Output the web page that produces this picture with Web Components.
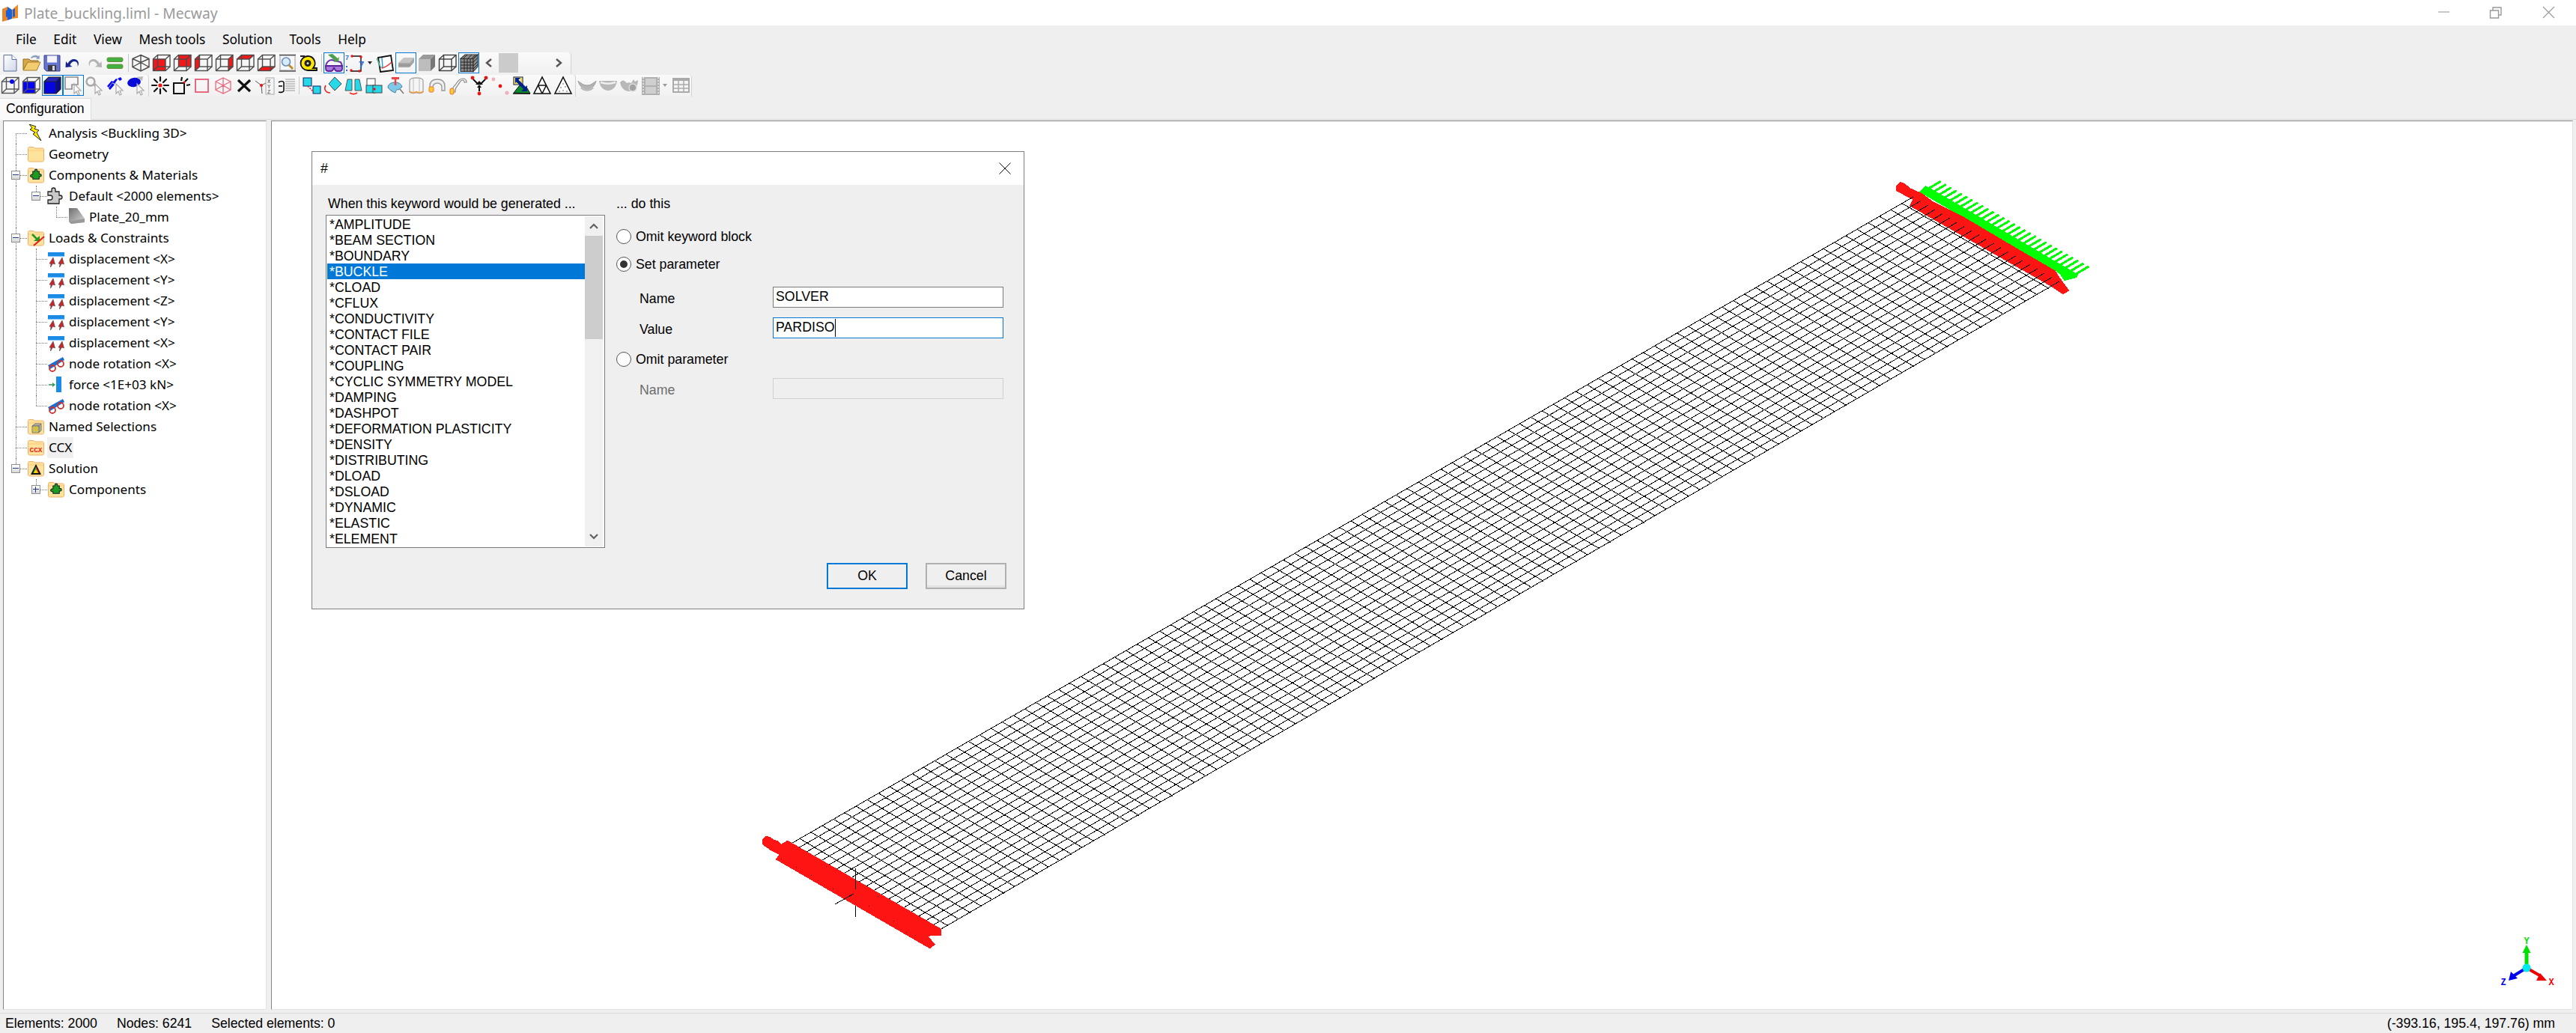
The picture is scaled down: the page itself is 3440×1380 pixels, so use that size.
<!doctype html>
<html><head><meta charset="utf-8"><title>Plate_buckling.liml - Mecway</title>
<style>
html,body{margin:0;height:100%;overflow:hidden;background:#efefef}
body{display:flex;flex-direction:column;font:17px "Noto Sans",sans-serif;color:#000}
</style></head><body>
<title-bar>Plate_buckling.liml - Mecway</title-bar>
<menu-bar><span>File</span><span>Edit</span><span>View</span><span>Mesh tools</span><span>Solution</span><span>Tools</span><span>Help</span></menu-bar>
<tool-row>
 <tool-bar style="width:763px">
  <tb-icon name="new"></tb-icon><tb-icon name="open"></tb-icon><tb-icon name="save"></tb-icon><tb-icon name="undo"></tb-icon><tb-icon name="redo"></tb-icon><tb-icon name="equal"></tb-icon><tb-sep></tb-sep>
  <tb-icon name="c0"></tb-icon><tb-icon name="c1"></tb-icon><tb-icon name="c2"></tb-icon><tb-icon name="c3"></tb-icon><tb-icon name="c4"></tb-icon><tb-icon name="c5"></tb-icon><tb-icon name="c6"></tb-icon><tb-icon name="zoom"></tb-icon><tb-icon name="tape"></tb-icon><tb-sep></tb-sep>
  <tb-icon name="glasses" sel></tb-icon><tb-icon name="graph"></tb-icon><tb-drop></tb-drop>
  <tb-icon name="axes"></tb-icon><tb-icon name="plate" sel></tb-icon><tb-icon name="block"></tb-icon><tb-icon name="wire"></tb-icon><tb-icon name="meshbox" sel></tb-icon>
  <tb-scroll></tb-scroll>
 </tool-bar>
</tool-row>
<tool-row>
 <tool-bar style="width:199px">
  <tb-icon name="pincube"></tb-icon><tb-icon name="bluecube"></tb-icon><tb-icon name="solidcube" sel></tb-icon><tb-icon name="rectsel" sel></tb-icon><tb-icon name="lasso"></tb-icon><tb-icon name="stripe"></tb-icon><tb-icon name="ellipse"></tb-icon>
 </tool-bar>
 <tool-bar style="width:570px;padding-left:1px">
  <tb-icon name="star"></tb-icon><tb-icon name="boxrays"></tb-icon><tb-icon name="pinksq"></tb-icon><tb-icon name="pinkcube"></tb-icon><tb-icon name="cross"></tb-icon><tb-icon name="nodexyz"></tb-icon><tb-icon name="lines"></tb-icon><tb-sep></tb-sep>
  <tb-icon name="cyan1"></tb-icon><tb-icon name="cyan2"></tb-icon><tb-icon name="cyan3"></tb-icon><tb-icon name="cyan4"></tb-icon><tb-icon name="fan"></tb-icon><tb-icon name="ring"></tb-icon><tb-icon name="elbow"></tb-icon><tb-icon name="curve"></tb-icon><tb-icon name="merge"></tb-icon><tb-icon name="dots"></tb-icon><tb-icon name="scale"></tb-icon><tb-icon name="tri"></tb-icon><tb-icon name="tridot"></tb-icon>
 </tool-bar>
 <tool-bar style="width:155px;padding-left:1px">
  <tb-icon name="bowl1"></tb-icon><tb-icon name="bowl2"></tb-icon><tb-icon name="bowl3"></tb-icon><tb-icon name="film"></tb-icon><tb-drop gray></tb-drop><tb-icon name="table" style="margin-left:2px"></tb-icon>
 </tool-bar>
</tool-row>
<tab-strip>Configuration</tab-strip>
<pane-row>
 <tree-pane>
  <tree-row level="0" icon="bolt" v="21:d">Analysis &lt;Buckling 3D&gt;</tree-row>
  <tree-row level="0" icon="folder" v="21">Geometry</tree-row>
  <tree-row level="0" icon="fpuzzle" exp="minus" v="21">Components &amp; Materials</tree-row>
  <tree-row level="1" icon="puzzle" exp="minus" v="21 48:h">Default &lt;2000 elements&gt;</tree-row>
  <tree-row level="2" icon="plateitem" v="21 75:h">Plate_20_mm</tree-row>
  <tree-row level="0" icon="floads" exp="minus" v="21">Loads &amp; Constraints</tree-row>
  <tree-row level="1" icon="disp" v="21 48">displacement &lt;X&gt;</tree-row>
  <tree-row level="1" icon="disp" v="21 48">displacement &lt;Y&gt;</tree-row>
  <tree-row level="1" icon="disp" v="21 48">displacement &lt;Z&gt;</tree-row>
  <tree-row level="1" icon="disp" v="21 48">displacement &lt;Y&gt;</tree-row>
  <tree-row level="1" icon="disp" v="21 48">displacement &lt;X&gt;</tree-row>
  <tree-row level="1" icon="rot" v="21 48">node rotation &lt;X&gt;</tree-row>
  <tree-row level="1" icon="force" v="21 48">force &lt;1E+03 kN&gt;</tree-row>
  <tree-row level="1" icon="rot" v="21 48:h">node rotation &lt;X&gt;</tree-row>
  <tree-row level="0" icon="fnamed" v="21">Named Selections</tree-row>
  <tree-row level="0" icon="fccx" v="21" hl>CCX</tree-row>
  <tree-row level="0" icon="fsol" exp="minus" v="21:h">Solution</tree-row>
  <tree-row level="1" icon="fpuzzle" exp="plus" v="48:h">Components</tree-row>
 </tree-pane>
 <view-port><mesh-view></mesh-view><key-dialog></key-dialog></view-port>
</pane-row>
<status-bar><span>Elements: 2000</span><span>Nodes: 6241</span><span>Selected elements: 0</span><span slot="right">(-393.16, 195.4, 197.76) mm</span></status-bar>
<script>
const ARIAL='"Liberation Sans",Arial,sans-serif';
function def(name,css,html,init){
  customElements.define(name,class extends HTMLElement{
    constructor(){super();const r=this.attachShadow({mode:'open'});r.innerHTML='<style>'+css+'</style>'+(typeof html==='function'?html(this):html);}
    connectedCallback(){ if(init) init(this,this.shadowRoot); }
  });
}
/* ---------- toolbar icons (28 box) ---------- */
const K='#4a4a4a';
function cube(face,col='#f01818',line=K){
  const f={front:'<rect x="2.5" y="9" width="16.5" height="15.5"/>',back:'<rect x="8.5" y="3.5" width="16.5" height="15.5"/>',
  left:'<polygon points="2.5,9 8.5,3.5 8.5,19 2.5,24.5"/>',right:'<polygon points="19,9 25,3.5 25,19 19,24.5"/>',
  top:'<polygon points="2.5,9 8.5,3.5 25,3.5 19,9"/>',bottom:'<polygon points="2.5,24.5 8.5,19 25,19 19,24.5"/>'};
  return `<g fill="${col}">${f[face]||''}</g><g fill="none" stroke="${line}" stroke-width="1.4"><rect x="2.5" y="9" width="16.5" height="15.5"/><rect x="8.5" y="3.5" width="16.5" height="15.5"/><path d="M2.5 9l6-5.5M19 9l6-5.5M2.5 24.5l6-5.5M19 24.5l6-5.5"/></g>`;
}
const arrowCursor=(x=15,y=12,c='#a8a8a8')=>`<path d="M${x} ${y}l9 9h-4l2 5-2 1-2-5-3 3z" fill="#fff" stroke="${c}" stroke-width="1.2"/>`;
const cy='#26d9e8';
const ICONS={
new:`<defs><linearGradient id="g" x1="0" y1="0" x2="1" y2="1"><stop offset="0" stop-color="#fff"/><stop offset="1" stop-color="#cfd8ea"/></linearGradient></defs><path d="M5 3.5h11l6 6v15.5H5z" fill="url(#g)" stroke="#5b6f99"/><path d="M16 3.5v6h6" fill="#fff" stroke="#5b6f99"/>`,
open:`<path d="M3 23V9h8l2 2h10v3H9L3 23z" fill="#d8a848" stroke="#8f6a1e"/><path d="M3 24l6-11h17l-5 11z" fill="#f4cc70" stroke="#a57c28"/><path d="M13 7c3-3.5 7-4 10-2l2-1-.5 5-4.5-.6 1.6-1.4c-2.6-1-5-.6-8 1" fill="#8ea0c0"/>`,
save:`<path d="M3 4h21v21H6l-3-3z" fill="#6474cf" stroke="#3a3f8a"/><rect x="7" y="4.5" width="13" height="9" fill="#f4f4ff"/><rect x="8" y="17" width="11" height="8" fill="#3b3b46"/><rect x="14" y="18" width="3" height="6" fill="#d8d8e0"/>`,
undo:`<path d="M8 17C11 11 16 10 19 11.5S24 17 21 21c1-4-1-7-4-7-3 0-5 2-6 5l3 2-9 1 .5-8z" fill="#16238c" transform="translate(-1.5,-2)"/>`,
redo:`<path d="M8 17C11 11 16 10 19 11.5S24 17 21 21c1-4-1-7-4-7-3 0-5 2-6 5l3 2-9 1 .5-8z" fill="#b4b4b4" transform="matrix(-1,0,0,1,29,-2)"/>`,
equal:`<rect x="3" y="7" width="21" height="5.5" rx="2" fill="#3fb33f" stroke="#6f8a3a"/><rect x="3" y="16" width="21" height="5.5" rx="2" fill="#3fb33f" stroke="#6f8a3a"/>`,
c0:`<path d="M14 3.5l11 5v11l-11 5.5-11-5.5v-11zM3 8.5l11 5 11-5M14 13.5V25M3 19.5l11-6 11 6M14 3.5v10" fill="none" stroke="${K}" stroke-width="1.4"/>`,
c1:cube('front'),c2:cube('back'),c3:cube('left'),c4:cube('right'),c5:cube('top'),c6:cube('bottom'),
zoom:`<rect x="4" y="4" width="20" height="20" fill="#f6f8fc" stroke="#999"/><path d="M3 3.5h22M3 25h22" stroke="#555" stroke-width="1.5"/><circle cx="12" cy="12.5" r="5.5" fill="#d8ecff" stroke="#6a8fb8" stroke-width="1.6"/><path d="M16 17l5 5" stroke="#c08a24" stroke-width="3"/>`,
tape:`<path d="M13 5a9.5 9.5 0 1 0 0 19h12v-3h-5a9.5 9.5 0 0 0-7-16z" fill="#ffe600" stroke="#111" stroke-width="1.8"/><circle cx="13" cy="14.5" r="4.5" fill="#222"/><circle cx="13" cy="14.5" r="1.5" fill="#ddd"/><path d="M3 5h6" stroke="#222" stroke-width="2"/>`,
glasses:`<path d="M3 19c0-5 4-9 8-9l12 3c1 2 2 4 2 6" fill="none" stroke="#6a2fa8" stroke-width="2"/><path d="M3 18h22v3c0 2-1 4-3 4h-4c-2 0-3-2-3.5-4h-1c-.5 2-2 4-3.5 4H6c-2 0-3-2-3-4z" fill="#a878d8" stroke="#5c1f9c" stroke-width="1.8"/><path d="M7 3l9 8-1 2 6-1 1-6-2 2-7-6z" fill="#4da04d" transform="translate(-1,0)"/>`,
graph:`<path d="M9 5h13v20H8" fill="none" stroke="#111" stroke-width="1.4"/><circle cx="10" cy="5" r="1.7" fill="#e11"/><circle cx="22" cy="6" r="1.7" fill="#e11"/><circle cx="9" cy="24" r="1.7" fill="#e11"/><circle cx="20" cy="25" r="1.7" fill="#e11"/><text x="1" y="10" font-size="9" font-family="Liberation Sans" font-weight="700" fill="#2d6ae0">7</text><text x="19" y="21" font-size="13" font-family="Liberation Sans" font-weight="700" fill="#2d6ae0">7</text><path d="M2 19h3M2 24h3" stroke="#2d6ae0" stroke-width="2" stroke-dasharray="2 1"/>`,
axes:`<path d="M5 7l17-3 3 20-17 2z" fill="#fff" stroke="#111" stroke-width="1.8"/><path d="M3 8c3 5 3 10 7 13" stroke="#5b9" fill="none" stroke-width="1.5"/><path d="M10 7l1 14" stroke="#39d" stroke-width="1.5"/><path d="M10 21c4-1 9-4 13-8" stroke="#e33" fill="none" stroke-width="1.5"/>`,
plate:`<polygon points="4,14 11,7 25,7 19,14" fill="#c4c4c4"/><polygon points="4,14 19,14 25,7 25,13 19,20 4,20" fill="#a6a6a6"/><path d="M4 17h16" stroke="#8a8a8a"/>`,
block:`<polygon points="3,9 19,9 19,25 3,25" fill="#bdbdbd"/><polygon points="3,9 9,3 25,3 19,9" fill="#9a9a9a"/><polygon points="19,9 25,3 25,19 19,25" fill="#777"/>`,
wire:cube('x','none','#3e3e3e'),
meshbox:`<g stroke="#333" stroke-width="1.1" fill="#8a8a8a"><rect x="3" y="8.5" width="17" height="17"/><polygon points="3,8.5 9,3 26,3 20,8.5"/><polygon points="20,8.5 26,3 26,19 20,25.5"/></g><path d="M8 9v17M12 9v17M16 9v17M3 13h17M3 17h17M3 21h17M12 3l-6 6M18 3l-6 6M23 3l-6 6M20 13l6-6M20 18l6-6M20 22l6-6" stroke="#222" stroke-width="1" fill="none"/>`,
pincube:cube('x','none','#555')+`<circle cx="16" cy="9" r="3" fill="#0a0af0"/>`,
bluecube:cube('front','#0505f5','#555'),
solidcube:`<polygon points="3,9 19,9 19,25 3,25" fill="#0505e0"/><polygon points="3,9 9,3 25,3 19,9" fill="#2828b8"/><polygon points="19,9 25,3 25,19 19,25" fill="#0a0a90"/><path d="M3 9l6-6h16v16l-6 6H3zM3 9h16v16M19 9l6-6" fill="none" stroke="#222" stroke-width="1.2"/>`,
rectsel:`<path d="M3 3h17v10h-8v6H3z" fill="none" stroke="#8a8a8a" stroke-width="1.6"/>`+arrowCursor(15,12),
lasso:`<circle cx="9" cy="9" r="5.5" fill="none" stroke="#a8a8a8" stroke-width="2.4"/><path d="M13 13l6 6" stroke="#a8a8a8" stroke-width="2"/>`+arrowCursor(15,12),
stripe:`<path d="M3 15l6-7 2 1-6 8zM10 10l5-5 2 1-4 6zM17 5l4-2 2 3-3 2z M5 18l5-7 3 2-6 7z" fill="#0a0af0"/>`+arrowCursor(15,12),
ellipse:`<ellipse cx="11" cy="10" rx="9" ry="6" fill="#0a0ad8" transform="rotate(-10 11 10)"/><path d="M14 3l9-1-1 6" fill="#bbb"/>`+arrowCursor(15,12),
star:`<g stroke="#111" stroke-width="2.2" stroke-linecap="round"><path d="M14 3v5M14 19v6M3 14h6M19 14h6M6 6l4 4M18 18l4 4M22 6l-4 4M10 18l-4 4"/></g><circle cx="14" cy="14" r="2.6" fill="#f01414"/>`,
boxrays:`<rect x="4" y="11" width="14" height="14" fill="none" stroke="#111" stroke-width="2"/><g stroke="#111" stroke-width="2.2"><path d="M14 8l1-5M19 9l4-4M21 14l5-1"/></g><circle cx="18" cy="10" r="1.6" fill="#e11"/>`,
pinksq:`<rect x="5" y="6" width="17" height="17" fill="none" stroke="#e86a80" stroke-width="2"/>`,
pinkcube:`<path d="M14 4l10 5v11l-10 5-10-5V9zM4 9l10 5 10-5M14 14v11M14 4v10M4 20l10-6 10 6" fill="none" stroke="#e86a80" stroke-width="1.3"/>`,
cross:`<path d="M6 7l16 15M22 7L6 22" stroke="#111" stroke-width="3.2"/>`,
nodexyz:`<path d="M1 8l8 6 1 11M9 14l8-4" stroke="#555" fill="none"/><circle cx="9" cy="14" r="2" fill="#e11"/><rect x="15" y="4" width="11" height="22" fill="#f4f4f4" stroke="#aaa"/><text x="17" y="11" font-size="7" font-family="Liberation Mono" fill="#444">X</text><text x="17" y="18" font-size="7" font-family="Liberation Mono" fill="#444">Y</text><text x="17" y="25" font-size="7" font-family="Liberation Mono" fill="#444">Z</text>`,
lines:`<path d="M4 10c3-2 6-2 7 0v11c0 2-4 3-7 2" fill="none" stroke="#111" stroke-width="1.6"/><path d="M4 15h5" stroke="#111" stroke-width="1.6"/><path d="M13 6h13M13 9h13M13 12h13M13 15h13M13 18h13M13 21h13" stroke="#999"/>`,
cyan1:`<rect x="3" y="4" width="11" height="11" fill="${cy}" stroke="#126"/><rect x="16" y="15" width="10" height="10" fill="${cy}" stroke="#126"/><path d="M9 15l8 8" stroke="#e11" stroke-width="1.5" stroke-dasharray="2 1.5"/>`,
cyan2:`<polygon points="17,3 26,12 17,21 9,12" fill="${cy}" stroke="#444"/><path d="M5 14c-3 5 0 10 6 10" fill="none" stroke="#e22" stroke-width="1.6"/>`,
cyan3:`<polygon points="6,6 12,6 12,21 3,21" fill="${cy}" stroke="#555"/><polygon points="16,6 22,6 25,21 16,21" fill="${cy}" stroke="#555"/><path d="M9 24c3 2 7 2 10 0" stroke="#e22" fill="none" stroke-width="1.8"/>`,
cyan4:`<rect x="4" y="5" width="11" height="11" fill="#fff" stroke="#444"/><rect x="3" y="14" width="12" height="10" fill="${cy}" stroke="#444"/><rect x="12" y="14" width="12" height="10" fill="${cy}" stroke="#444"/><circle cx="14" cy="19" r="1.7" fill="#e11"/>`,
fan:`<path d="M4 17c0-5 5-7 10-7 4 0 8 2 9 6l-5 4c-2-1-3 0-4 4-3-1-7-3-10-7z" fill="#7ec8e8" stroke="#4a7f9c"/><rect x="9" y="3" width="10" height="3" fill="#e44"/><path d="M14 6v8" stroke="#e44" stroke-width="2.5"/><path d="M20 19l5 6" stroke="#777" stroke-width="1.4"/>`,
ring:`<path d="M5 8c0-3 4-4 9-4s9 1 9 4v15c-2 2-6 2-9 .5-3 1.5-7 1.5-9-.5z" fill="#f5f5f5" stroke="#aaa" stroke-width="1.4"/><path d="M10 5v18M18 5v18" stroke="#bbb"/><path d="M5 22c2 2 6 2 9 .5 3 1.5 7 1.5 9-.5" fill="none" stroke="#f59a3c" stroke-width="1.8"/>`,
elbow:`<path d="M4 21v-6c0-6 4-9 10-9s10 3 10 9v6h-4v-5c0-3-3-5-6-5s-6 2-6 5v5z" fill="#f0f0f0" stroke="#999" stroke-width="1.4"/><rect x="3" y="16" width="6" height="7" rx="1.5" fill="#ffcc30" stroke="#f07030"/>`,
curve:`<path d="M6 23c-1-6 3-8 5-11s4-7 9-7c3 0 5 2 5 5h-3c0-2-1-3-2-3-3 0-4 3-6 6s-5 5-4 10z" fill="#f4f4f4" stroke="#888" stroke-width="1.2"/><rect x="3" y="18" width="5" height="8" rx="2" fill="#ffcc30" stroke="#f07030"/>`,
merge:`<circle cx="5" cy="4" r="2.4" fill="#e11"/><circle cx="23" cy="4" r="2.4" fill="#e11"/><circle cx="14" cy="25" r="2.4" fill="#e11"/><path d="M6 6l7 7M22 6l-7 7M14 22v-6" stroke="#111" stroke-width="2"/><path d="M9 13h5v-5zM19 13h-5v-5zM11 17h6l-3-4z" fill="#111"/>`,
dots:`<circle cx="5" cy="6" r="2.4" fill="#f2b0bc"/><circle cx="14" cy="15" r="2.4" fill="#e11"/><circle cx="23" cy="24" r="2.6" fill="#f2b0bc"/>`,
scale:`<polygon points="4,24 12,14 22,18 26,25" fill="#0b8a2a" stroke="#111"/><rect x="4" y="3" width="12" height="10" fill="#fff" stroke="#111"/><rect x="6" y="5" width="8" height="6" fill="none" stroke="#e8d000" stroke-width="1.5"/><path d="M8 7l13 13" stroke="#00208a" stroke-width="4"/><path d="M22 22v-8l-8 8zM6 4h7l-7 7z" fill="#00208a"/><path d="M3 25h23" stroke="#111" stroke-width="1.5"/>`,
tri:`<path d="M14 3L3 25h22zM8.5 14h11M14 25l-5.5-11M14 25l5.5-11" fill="#fff" stroke="#111" stroke-width="1.6"/>`,
tridot:`<path d="M14 3L3 25h22z" fill="#fff" stroke="#111" stroke-width="1.6"/><g fill="#555"><circle cx="14" cy="12" r=".8"/><circle cx="11" cy="17" r=".8"/><circle cx="17" cy="16" r=".8"/><circle cx="9" cy="22" r=".8"/><circle cx="14" cy="21" r=".8"/><circle cx="19" cy="22" r=".8"/></g>`,
bowl1:`<path d="M2 8c2 8 7 11 12 11s10-3 12-11c-2 2-2 2-4 3-4 4-12 4-16 0-2-1-2-1-4-3z" fill="#b4b4b4" stroke="#9a9a9a"/><path d="M6 17c5 4 11 4 16 0" stroke="#bbb" stroke-width="3" fill="none"/>`,
bowl2:`<path d="M2 8h24c-1 8-6 13-12 13S3 16 2 8z" fill="#b8b8b8"/><path d="M4 10c6 2 14 2 20 0" stroke="#eee" stroke-width="2.5" fill="none"/>`,
bowl3:`<path d="M2 10c3-3 4-3 6-2l3 3c2-1 4-1 6 0l3-5 2 3 4-2c0 8-5 15-12 15S3 16 2 10z" fill="#b8b8b8"/><circle cx="19" cy="17" r="5" fill="#a2a2a2" stroke="#ddd" stroke-width="1.5"/>`,
film:`<rect x="3" y="3" width="24" height="24" fill="#b0b0b0"/><rect x="8" y="5" width="14" height="9" fill="#cfcfcf"/><rect x="8" y="16" width="14" height="9" fill="#cfcfcf"/><path d="M5 3v24M25 3v24" stroke="#ddd" stroke-width="2" stroke-dasharray="2 2"/>`,
table:`<rect x="3" y="5" width="21" height="18" fill="#f4f4f4" stroke="#aaa" stroke-width="2"/><rect x="3" y="5" width="21" height="3" fill="#aaa"/><path d="M3 13h21M3 18h21M10 8v15M17 8v15" stroke="#aaa" stroke-width="1.5"/>`
};
def('tb-icon',`:host{display:block;flex:none;width:28px;height:28px;box-sizing:border-box;position:relative}
:host([sel]){outline:1px solid #0078d7;outline-offset:-1px}
svg{display:block}`,h=>`<svg width="28" height="28" viewBox="0 0 28 28">${ICONS[h.getAttribute('name')]||''}</svg>`);
def('tb-sep',`:host{display:flex;flex:none;width:6px;height:28px;justify-content:center;align-items:center}i{display:block;width:1px;height:24px;background:#c8c8c8}`,'<i></i>');
def('tb-drop',`:host{display:flex;flex:none;width:12px;height:28px;align-items:center;justify-content:center}i{display:block;border:3px solid transparent;border-top:4px solid #222;border-bottom:0}:host([gray]) i{border-top-color:#999}`,'<i></i>');
def('tb-scroll',`:host{flex:1;display:flex;align-items:center;height:28px}
.t{width:26px;height:26px;background:#cbcbcb;margin-left:8px}svg{display:block;flex:none}.r{margin-left:49px}.l{margin-left:8px}`,
`<svg class="l" width="10" height="12" viewBox="0 0 10 12"><path d="M8 1L2 6l6 5" fill="none" stroke="#555" stroke-width="2.4"/></svg><div class="t"></div><svg class="r" width="10" height="12" viewBox="0 0 10 12"><path d="M2 1l6 5-6 5" fill="none" stroke="#555" stroke-width="2.4"/></svg>`);
def('tool-bar',`:host{display:flex;flex:none;box-sizing:border-box;height:29px;align-items:flex-start;background:linear-gradient(#fafafa,#f1f1f1);border-top-right-radius:4px;border-right:1px solid #d2d2d2}`,'<slot></slot>');
def('tool-row',`:host{display:flex;flex:none;height:30px}`,'<slot></slot>');
/* ---------- window chrome ---------- */
def('title-bar',`:host{display:flex;flex:none;height:34px;background:#fff;align-items:center;color:#9a9a9a;font:19.3px "Noto Sans",sans-serif;position:relative}
svg{margin:0 8px 0 3px}.c{margin-left:auto;display:flex;height:34px}`,
`<svg width="21" height="25" viewBox="0 0 21 25"><path d="M0 7l7-3v18l-7 2z" fill="#e8842a"/><path d="M7 4l6 4v12l-6 2z" fill="#1b62d8"/><path d="M13 8l8-7v18l-8 1z" fill="#f08a24"/><path d="M5 9l3-1v9l-3 1zM14 8l3-2v11l-3 1z" fill="#1b62d8"/></svg><slot></slot>
<div class="c"><svg style="margin:0" width="184" height="34" viewBox="3256 0 184 34" fill="none" stroke="#999" stroke-width="1.1"><path d="M3256 16h15"/><path d="M3325.5 14h11v10h-11zM3329 14v-4h11v10h-3.5" stroke-width="1.4"/><path d="M3396 9l15 15M3411 9l-15 15"/></svg></div>`);
def('menu-bar',`:host{display:flex;flex:none;height:36px;align-items:center;padding-left:21px;background:#efefef;font:17.3px "Noto Sans",sans-serif}
::slotted(span){margin-right:22.7px}`,'<slot></slot>');
def('tab-strip',`:host{display:block;flex:none;height:30px;box-sizing:border-box;padding-top:1px;border-bottom:1px solid #d8d8d8;font:17.6px ${ARIAL}}
.t{box-sizing:border-box;width:122px;height:29px;background:#fafafa;border:1px solid #dcdcdc;border-left:0;border-bottom:0;padding-left:8px;line-height:27px}`,'<div class="t"><slot></slot></div>');
def('pane-row',`:host{flex:1;display:flex;gap:6px;padding:1px 4px 4px;min-height:0}`,'<slot></slot>');
const sunk='border:1px solid;border-color:#858585 #e3e3e3 #e3e3e3 #858585;background:#fff;box-sizing:border-box;';
def('tree-pane',`:host{display:block;flex:none;width:352px;${sunk}padding-top:2px;overflow:hidden}`,'<slot></slot>');
def('view-port',`:host{display:block;flex:1;position:relative;${sunk}overflow:hidden}`,'<slot></slot>');
def('status-bar',`:host{display:flex;flex:none;height:27px;box-sizing:border-box;border-top:1px solid #d9d9d9;align-items:center;padding:0 28px 0 7px;gap:26px;font:17.7px ${ARIAL}}
.r{margin-left:auto}`,'<slot></slot><div class="r"><slot name="right"></slot></div>');
/* ---------- tree ---------- */
const folderT=(inner='')=>`<path d="M1.500 4.500c0-1 .6-2 1.600-2H8c1 0 1.400.5 2 1.500h10.500c1.200 0 2 .8 2 2v14c0 1-.8 2-2 2h-17c-1 0-2-1-2-2z" fill="#ffe29b" stroke="#efb168"/><path d="M2 7h20" stroke="#fbc87c"/>${inner}`;
const pz=(c,s)=>`<path d="M8 6h3V4.500a2 2 0 1 1 4 0V6h3v4h1.500a2 2 0 1 1 0 4H18v4H8v-3H6.500a2.200 2.200 0 1 1 0-4.400H8z" fill="${c}" stroke="${s}" stroke-width="1.2"/>`;
const TI={
bolt:`<path d="M3 0l9 3-2 3 6 2-3 3 6 11-11-9 3-2-7-4 3-2z" fill="#ffe800" stroke="#111" stroke-width=".9"/>`,
folder:folderT(),
fpuzzle:folderT(`<g transform="translate(1,2) scale(.85)">${pz('#1e9a1e','#123')}</g>`),
puzzle:`<path d="M1 6h5V3.500a2.500 2.500 0 1 1 5 0V6h5v5h1.500a2.500 2.500 0 1 1 0 5H16v6H1v-5h3a2.500 2.500 0 1 0 0-6H1z" fill="#c8c8c8" stroke="#222" stroke-width="1.300"/>`,
plateitem:`<defs><linearGradient id="p" x1="0" y1="0" x2="1" y2="1"><stop offset="0" stop-color="#707070"/><stop offset="1" stop-color="#d8d8d8"/></linearGradient></defs><polygon points="2,0 13,0 23,14 23,19 5,21 2,18" fill="url(#p)"/><polygon points="2,18 23,14 23,19 5,21" fill="#999"/>`,
floads:folderT(`<path d="M7 7l8 8" stroke="#1e9a1e" stroke-width="2.500"/><path d="M7 15h8V8z" fill="#1e9a1e" transform="translate(2,1)"/><path d="M9 22L23 10" stroke="#e81c1c" stroke-width="2.200"/>`),
disp:`<rect x="1" y="3" width="22" height="5.500" fill="#1a8ce8"/><path d="M8 10l-5 8 2 .5-.5 4.500 3-5 3 1z" fill="#c8242a" stroke="#555" stroke-width=".7"/><path d="M20 10l-5 8 2 .5-.5 4.500 3-5 3 1z" fill="#c8242a" stroke="#555" stroke-width=".7"/>`,
rot:`<path d="M1 14L21 3l2 4L4 19z" fill="#1a6fd0"/><circle cx="7" cy="18" r="4" fill="none" stroke="#c33" stroke-width="1.800"/><circle cx="18" cy="12" r="4" fill="none" stroke="#c33" stroke-width="1.800"/>`,
force:`<rect x="12" y="1" width="7" height="21" fill="#1a8ce8"/><path d="M2 12h6" stroke="#5cb080" stroke-width="2"/><path d="M7 9l4 3-4 3z" fill="#3c9c60"/>`,
fnamed:folderT(`<g fill="#b8b8a0" stroke="#777"><path d="M7 11l4-3h8l-3 3zM7 11h9v9H7zM16 11l3-3v9l-3 3z"/></g><path d="M7 14h9M7 17h9M10 11v9M13 11v9" stroke="#e8c800"/>`),
fccx:folderT(`<text x="12" y="18" text-anchor="middle" font-family="Liberation Mono" font-weight="700" font-size="9.500" fill="#ee2020">CCX</text>`),
fsol:folderT(`<path d="M12 6l-7 14h14z" fill="#111"/><path d="M12 9l-4 9h4z" fill="#2ab52a"/><path d="M12 9l4 9h-4z" fill="#f03030"/><path d="M9 18h6l-3-5z" fill="#ffd800"/>`)
};
def('tree-row',`:host{display:flex;height:28px;align-items:center;position:relative;white-space:nowrap;font:17.1px "Noto Sans",sans-serif;color:#000}
svg{flex:none;display:block;position:relative}
.l{margin-left:3px;padding:0 2px;height:28px;line-height:27px}
:host([hl]) .l{background:#f0f0f0}
.v,.h{position:absolute;border:0 dotted #777}.v{border-left-width:1px}.h{border-top-width:1px;top:14px}
.e{position:absolute;box-sizing:border-box;width:12px;height:12px;top:8px;border:1px solid #8f8f8f;background:linear-gradient(#fff,#d8d8d8)}
.e:before{content:"";position:absolute;left:1px;right:1px;top:4px;height:1px;background:#223a8a}
.e.plus:after{content:"";position:absolute;top:1px;bottom:1px;left:4px;width:1px;background:#223a8a}`,
h=>{const L=+h.getAttribute('level'),ix=[31,58,85][L],vx=[16,43,70][L];
  let g='';(h.getAttribute('v')||'').split(' ').forEach(s=>{const[x,m]=s.split(':');const X=x-5;
    g+=`<i class="v" style="left:${X}px;top:${m==='d'?14:0}px;height:${m==='h'||m==='d'?14:28}px"></i>`;});
  g+=`<i class="h" style="left:${vx}px;width:${ix-vx}px"></i>`;
  const ex=h.getAttribute('exp');if(ex)g+=`<i class="e ${ex}" style="left:${vx-6}px"></i>`;
  return g+`<svg style="margin-left:${ix}px" width="24" height="24" viewBox="0 0 24 24">${TI[h.getAttribute('icon')]}</svg><div class="l"><slot></slot></div>`;});
/* ---------- dialog ---------- */
const KW=['AMPLITUDE','BEAM SECTION','BOUNDARY','BUCKLE','CLOAD','CFLUX','CONDUCTIVITY','CONTACT FILE','CONTACT PAIR','COUPLING','CYCLIC SYMMETRY MODEL','DAMPING','DASHPOT','DEFORMATION PLASTICITY','DENSITY','DISTRIBUTING','DLOAD','DSLOAD','DYNAMIC','ELASTIC','ELEMENT'];
def('key-radio',`:host{display:flex;align-items:center;height:24px;gap:6px}
i{box-sizing:border-box;width:20px;height:20px;border-radius:50%;border:1.500px solid #555;background:#fff;display:flex;align-items:center;justify-content:center}
b{width:10px;height:10px;border-radius:50%;background:#333;display:none}:host([on]) b{display:block}`,'<i><b></b></i><slot></slot>');
def('key-field',`:host{display:flex;align-items:center;height:28px;padding-left:31px}
.n{width:178px;padding-top:4px}.b{box-sizing:border-box;width:308px;height:28px;background:#fff;border:1px solid #7a7a7a;padding-left:3px;line-height:24px;display:flex}
:host([focus]) .b{border-color:#0078d7}:host([focus]) u{display:block;width:1px;height:24px;background:#000;margin-top:1px}
:host([off]) .n{color:#6d6d6d}:host([off]) .b{background:#efefef;border:1px solid #d0d0d0}`,
h=>`<div class="n">${h.getAttribute('label')}</div><div class="b"><slot></slot><u></u></div>`);
def('key-button',`:host{display:flex;box-sizing:border-box;width:108px;height:35px;align-items:center;justify-content:center;border:2px solid #b0b0b0;background:#efefef;box-shadow:inset 0 -3px #e3e3e3}
:host([def]){border-color:#0078d7;box-shadow:none}`,'<slot></slot>');
def('key-dialog',`:host{position:absolute;left:53px;top:40px;width:952px;height:612px;box-sizing:border-box;border:1px solid #7e7e7e;background:#efefef;display:flex;flex-direction:column;font:17.75px ${ARIAL};color:#000}
.tb{flex:none;height:44px;background:#fff;display:flex;align-items:center;justify-content:space-between;padding:0 17px 0 11px}
.main{display:grid;grid-template-columns:388px 1fr;padding:15px 0 0 18px}
.cap{height:21px;line-height:21px;padding-left:3px}
.list{box-sizing:border-box;width:373px;height:445px;border:1px solid #7a7a7a;background:#fff;margin-top:4px;padding:1px 2px 1px 1px;display:flex}
.items{flex:1}.it{height:21px;line-height:22px;padding-left:3px;white-space:nowrap}.it.s{background:#0078d7;color:#fff}
.sb{width:24px;background:#f0f0f0;display:flex;flex-direction:column;align-items:center;height:441px}
.ar{height:26px;display:flex;align-items:center;justify-content:center;flex:none}.th{width:24px;height:138px;background:#cdcdcd;flex:none}.sp{flex:1}
.r{display:flex;flex-direction:column}
.foot{display:flex;justify-content:flex-end;gap:24px;padding:20px 23px 0 0}`,
`<div class="tb"><span>#</span><svg width="16" height="16" viewBox="0 0 16 16"><path d="M.5.500l15 15M15.500.500l-15 15" stroke="#111" fill="none"/></svg></div>
<div class="main"><div><div class="cap">When this keyword would be generated ...</div>
<div class="list"><div class="items">${KW.map(k=>`<div class="it${k==='BUCKLE'?' s':''}">*${k}</div>`).join('')}</div>
<div class="sb"><div class="ar"><svg width="12" height="8" viewBox="0 0 12 8"><path d="M1 7l5-5 5 5" fill="none" stroke="#606060" stroke-width="2.200"/></svg></div><div class="th"></div><div class="sp"></div><div class="ar"><svg width="12" height="8" viewBox="0 0 12 8"><path d="M1 1l5 5 5-5" fill="none" stroke="#606060" stroke-width="2.200"/></svg></div></div></div></div>
<div class="r"><div class="cap" style="padding-left:0">... do this</div>
<key-radio style="margin-top:21px">Omit keyword block</key-radio>
<key-radio on style="margin-top:13px">Set parameter</key-radio>
<key-field label="Name" style="margin-top:18px">SOLVER</key-field>
<key-field label="Value" focus style="margin-top:13px">PARDISO</key-field>
<key-radio style="margin-top:16px">Omit parameter</key-radio>
<key-field label="Name" off style="margin-top:13px"></key-field></div></div>
<div class="foot"><key-button def>OK</key-button><key-button>Cancel</key-button></div>`);
/* ---------- 3D view ---------- */
function meshSvg(){
  const P0=[2555,263],P1=[2750,376],Q0=[1053,1129],Q1=[1250,1245];
  const lerp=(a,b,t)=>[a[0]+(b[0]-a[0])*t,a[1]+(b[1]-a[1])*t];
  let d='',dots='',ticks='';
  for(let i=0;i<=20;i++){const a=lerp(P0,P1,i/20),b=lerp(Q0,Q1,i/20);d+=`M${a[0].toFixed(1)} ${a[1].toFixed(1)}L${b[0].toFixed(1)} ${b[1].toFixed(1)}`;
    const s=lerp(a,b,.009);ticks+=`M${a[0].toFixed(1)} ${a[1].toFixed(1)}L${s[0].toFixed(1)} ${s[1].toFixed(1)}`;}
  for(let j=0;j<=100;j++){const a=lerp(P0,Q0,j/100),b=lerp(P1,Q1,j/100);d+=`M${a[0].toFixed(1)} ${a[1].toFixed(1)}L${b[0].toFixed(1)} ${b[1].toFixed(1)}`;
    for(let i=0;i<=20;i++)if((i+j)%3===0){const n=lerp(a,b,i/20);dots+=`<rect x="${Math.round(n[0])-1}" y="${Math.round(n[1])}" width="2" height="1"/>`;}}
  const z8=(a)=>a.map(([x,y])=>`${(2480+x/3).toFixed(1)},${(210+y/3).toFixed(1)}`).join(' ');
  const z9=(a)=>a.map(([x,y])=>`${(980+x/3).toFixed(1)},${(1080+y/3).toFixed(1)}`).join(' ');
  const redT=[[172,100],[185,102],[215,125],[260,145],[300,175],[420,235],[640,365],[795,455],[810,480],[850,535],[825,550],[780,520],[210,195],[222,170],[175,145],[155,135],[155,115]];
  const grn=[[250,140],[275,115],[300,128],[885,470],[880,483],[830,495],[815,472],[795,455]];
  const redB=[[130,110],[145,115],[160,125],[175,130],[190,143],[215,128],[830,482],[830,510],[790,510],[780,515],[808,545],[785,562],[168,205],[180,185],[150,170],[115,145],[115,125]];
  let g='';const N=29;for(let i=0;i<N;i++){const t=i/(N-1),x=2480+(335+593*t)/3,y=210+(97+341*t)/3;g+=`M${x.toFixed(1)} ${y.toFixed(1)}l-17 10`;}
  const sp=[[190,202],[250,235],[310,267],[337,289],[370,232],[397,322],[485,377],[541,391],[577,352],[640,450],[690,496],[725,508],[752,530]].map(([x,y])=>`<rect x="${Math.round(980+x/3)}" y="${Math.round(1080+y/3)}" width="1" height="1"/>`).join('');
  return `<svg width="3072" height="1185" viewBox="363 162 3072 1185" shape-rendering="crispEdges">
<path d="${d}" stroke="#000" fill="none"/><g fill="#000">${dots}</g>
<path d="${g}" stroke="#00ff00" stroke-width="3" fill="none"/><polygon points="${z8(grn)}" fill="#00ff00"/>
<polygon points="${z8(redT)}" fill="#ff1414"/><path d="${ticks}" stroke="#000" fill="none"/>
<polygon points="${z9(redB)}" fill="#ff1414"/><g fill="#300">${sp}</g>
<path d="M1142 1160v28M1142 1210v15M1115 1208l25-14" stroke="#000" fill="none"/>
<g shape-rendering="auto"><path d="M3374 1293v-22" stroke="#00e000" stroke-width="5"/><path d="M3374 1262l-5.500 11h11z" fill="#00e000"/>
<path d="M3374 1293l-18 11" stroke="#0000f0" stroke-width="4"/><path d="M3350 1310l3-12 9 9z" fill="#0000f0"/>
<path d="M3374 1293l19 11" stroke="#f00000" stroke-width="4"/><path d="M3401 1310l-14 0 5-10z" fill="#f00000"/>
<circle cx="3374" cy="1293" r="5.500" fill="#00e8f0"/>
<g font-family="Liberation Mono" font-weight="700" font-size="12"><text x="3374" y="1261" text-anchor="middle" fill="#00e000">Y</text><text x="3343" y="1316" text-anchor="middle" fill="#0000f0">Z</text><text x="3407" y="1316" text-anchor="middle" fill="#f00000">X</text></g></g></svg>`;
}
def('mesh-view',`:host{position:absolute;inset:0;display:block}svg{display:block}`,meshSvg);
</script>
</body></html>
